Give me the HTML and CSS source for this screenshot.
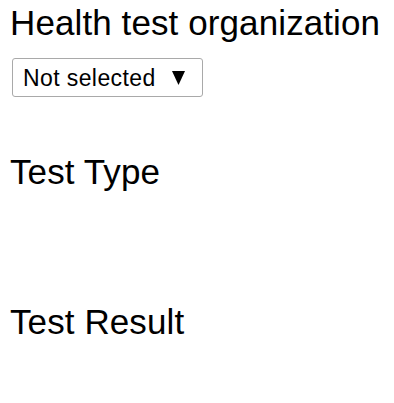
FILE: index.html
```html
<!DOCTYPE html>
<html lang="en">
<head>
<meta charset="utf-8">
<title>Health test</title>
<link rel="stylesheet" href="styles.css">
</head>
<body>
<form class="form">
  <section class="field field-org">
    <h2 class="field-title">Health test organization</h2>
    <div class="picker" role="button">
      <span class="picker-label">Not selected</span>
      <svg class="picker-arrow" width="13" height="14" viewBox="0 0 13 14" aria-hidden="true"><polygon points="0,0 13,0 6.5,14" fill="#000"/></svg>
    </div>
  </section>
  <section class="field field-type">
    <h2 class="field-title">Test Type</h2>
    <div class="field-options"></div>
  </section>
  <section class="field field-result">
    <h2 class="field-title">Test Result</h2>
  </section>
</form>
</body>
</html>
```

FILE: styles.css
```css
html, body {
  margin: 0;
  padding: 0;
  background: #fff;
}

body {
  font-family: "Liberation Sans", Arial, sans-serif;
  color: #000;
}

.form {
  display: flex;
  flex-direction: column;
  padding: 3px 0 0 10px;
}

.field-title {
  margin: 0;
  font-size: 35px;
  line-height: 40px;
  font-weight: normal;
  letter-spacing: 0.1px;
}

.picker {
  box-sizing: border-box;
  display: flex;
  align-items: center;
  justify-content: space-between;
  width: 191px;
  height: 39px;
  margin: 15px 0 0 2px;
  padding: 1px 17px 0 10px;
  border: 1px solid #a9a9a9;
  border-radius: 3px;
  font-size: 23px;
  letter-spacing: 0.4px;
}

.picker-arrow {
  display: block;
}

.field-type {
  margin-top: 55px;
}

.field-options {
  height: 110px;
}
```
